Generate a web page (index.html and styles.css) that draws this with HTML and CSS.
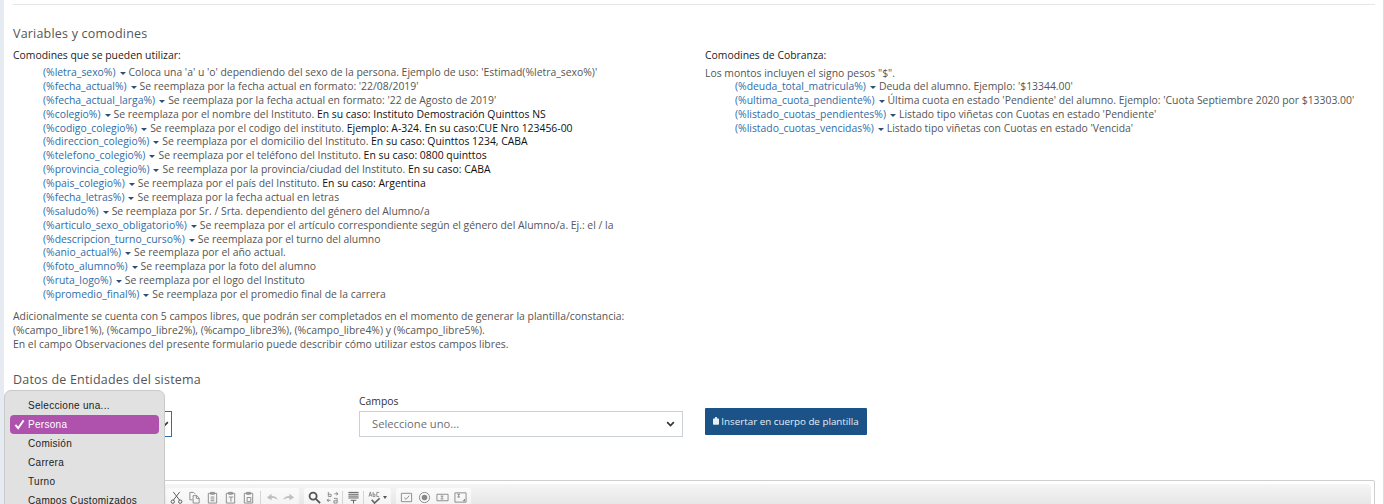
FILE: index.html
```html
<!DOCTYPE html>
<html lang="es">

<head>
    <meta charset="UTF-8">
    <meta name="viewport" content="width=device-width, initial-scale=1.0">
    <title>Plantilla - Variables y comodines</title>
    <link rel="stylesheet" href="styles.css">
</head>

<body>
    <div class="page">
        <hr class="top-line">

        <h2 class="section-title">Variables y comodines</h2>

        <div class="columns">
            <div class="col-left">
                <p class="col-title">Comodines que se pueden utilizar:</p>
                <ul class="vars">
                    <li><a>(%letra_sexo%)</a><i class="caret"></i>Coloca una 'a' u 'o' dependiendo del sexo de la persona. Ejemplo de uso: 'Estimad(%letra_sexo%)'</li>
                    <li><a>(%fecha_actual%)</a><i class="caret"></i>Se reemplaza por la fecha actual en formato: '22/08/2019'</li>
                    <li><a>(%fecha_actual_larga%)</a><i class="caret"></i>Se reemplaza por la fecha actual en formato: '22 de Agosto de 2019'</li>
                    <li><a>(%colegio%)</a><i class="caret"></i>Se reemplaza por el nombre del Instituto. <b>En su caso: Instituto Demostración Quinttos NS</b></li>
                    <li><a>(%codigo_colegio%)</a><i class="caret"></i>Se reemplaza por el codigo del instituto. <b>Ejemplo: A-324. En su caso:CUE Nro 123456-00</b></li>
                    <li><a>(%direccion_colegio%)</a><i class="caret"></i>Se reemplaza por el domicilio del Instituto. <b>En su caso: Quinttos 1234, CABA</b></li>
                    <li><a>(%telefono_colegio%)</a><i class="caret"></i>Se reemplaza por el teléfono del Instituto. <b>En su caso: 0800 quinttos</b></li>
                    <li><a>(%provincia_colegio%)</a><i class="caret"></i>Se reemplaza por la provincia/ciudad del Instituto. <b>En su caso: CABA</b></li>
                    <li><a>(%pais_colegio%)</a><i class="caret"></i>Se reemplaza por el país del Instituto. <b>En su caso: Argentina</b></li>
                    <li><a>(%fecha_letras%)</a><i class="caret"></i>Se reemplaza por la fecha actual en letras</li>
                    <li><a>(%saludo%)</a><i class="caret"></i>Se reemplaza por Sr. / Srta. dependiento del género del Alumno/a</li>
                    <li><a>(%articulo_sexo_obligatorio%)</a><i class="caret"></i>Se reemplaza por el artículo correspondiente según el género del Alumno/a. Ej.: el / la</li>
                    <li><a>(%descripcion_turno_curso%)</a><i class="caret"></i>Se reemplaza por el turno del alumno</li>
                    <li><a>(%anio_actual%)</a><i class="caret"></i>Se reemplaza por el año actual.</li>
                    <li><a>(%foto_alumno%)</a><i class="caret"></i>Se reemplaza por la foto del alumno</li>
                    <li><a>(%ruta_logo%)</a><i class="caret"></i>Se reemplaza por el logo del Instituto</li>
                    <li><a>(%promedio_final%)</a><i class="caret"></i>Se reemplaza por el promedio final de la carrera</li>
                </ul>
            </div>
            <div class="col-right">
                <p class="col-title">Comodines de Cobranza:</p>
                <p class="col-note">Los montos incluyen el signo pesos "$".</p>
                <ul class="vars">
                    <li><a>(%deuda_total_matricula%)</a><i class="caret"></i>Deuda del alumno. Ejemplo: '$13344.00'</li>
                    <li><a>(%ultima_cuota_pendiente%)</a><i class="caret"></i>Última cuota en estado 'Pendiente' del alumno. Ejemplo: 'Cuota Septiembre 2020 por $13303.00'</li>
                    <li><a>(%listado_cuotas_pendientes%)</a><i class="caret"></i>Listado tipo viñetas con Cuotas en estado 'Pendiente'</li>
                    <li><a>(%listado_cuotas_vencidas%)</a><i class="caret"></i>Listado tipo viñetas con Cuotas en estado 'Vencida'</li>
                </ul>
            </div>
        </div>

        <p class="extra">
            Adicionalmente se cuenta con 5 campos libres, que podrán ser completados en el momento de generar la plantilla/constancia:<br>
            (%campo_libre1%), (%campo_libre2%), (%campo_libre3%), (%campo_libre4%) y (%campo_libre5%).<br>
            En el campo Observaciones del presente formulario puede describir cómo utilizar estos campos libres.
        </p>

        <h2 class="section-title entities">Datos de Entidades del sistema</h2>

        <div class="form-row">
            <div class="field field-entity">
                <label>&nbsp;</label>
                <div class="select select-focus"><svg class="chev" viewBox="0 0 12 8"><path d="M1.500 1.500 6 6l4.500-4.500" /></svg></div>
            </div>
            <div class="field field-campos">
                <label>Campos</label>
                <div class="select"><span>Seleccione uno...</span><svg class="chev" viewBox="0 0 12 8"><path d="M1.500 1.500 6 6l4.500-4.500" /></svg></div>
            </div>
            <button class="btn-insert"><svg class="clip" viewBox="0 0 8 10"><path d="M1 1.500h1.500V1a1 1 0 0 1 3 0v.5H7a1 1 0 0 1 1 1V9a1 1 0 0 1-1 1H1a1 1 0 0 1-1-1V2.500a1 1 0 0 1 1-1z" /></svg>Insertar en cuerpo de plantilla</button>
        </div>

        <div class="editor">
            <div class="toolbar">
                <div class="tool-group group-edit">
                    <svg class="ico" viewBox="0 0 14 14"><path class="dark" d="M3.500 1l7 9M10.500 1l-7 9" /><circle class="dark" cx="3" cy="11.500" r="1.800" /><circle class="dark" cx="11" cy="11.500" r="1.800" /></svg>
                    <svg class="ico" viewBox="0 0 14 14"><path d="M5 9.500H2V1.500h4l2 2M5.500 5h4l2.500 2.500v5.500H5.500zM9 5v3h3" /></svg>
                    <svg class="ico" viewBox="0 0 14 14"><path d="M2.500 2.500h9v10.500h-9zM5 1.500h4v2H5zM5 6.500h4M5 8.500h4M5 10.500h4" /></svg>
                    <svg class="ico" viewBox="0 0 14 14"><path d="M2.500 2.500h9v10.500h-9zM5 1.500h4v2H5zM5 6.500h5M7.500 6.500v5" /></svg>
                    <svg class="ico" viewBox="0 0 14 14"><path d="M2.500 2.500h9v10.500h-9zM5 1.500h4v2H5zM5.500 7v4.500h4V7z" /></svg>
                    <i class="tool-sep sep-wide"></i>
                    <svg class="ico faded" viewBox="0 0 14 14"><path class="fill" d="M1 7l5-4v2.500c3 0 5.500 1 7 4-2-1.500-4-2-7-2V10z" /></svg>
                    <svg class="ico faded" viewBox="0 0 14 14"><path class="fill" d="M13 7L8 3v2.500c-3 0-5.500 1-7 4 2-1.500 4-2 7-2V10z" /></svg>
                </div>
                <div class="tool-group group-find">
                    <svg class="ico" viewBox="0 0 14 14"><circle class="heavy" cx="5.500" cy="5.500" r="3.800" /><path class="heavy" d="M8.500 8.500 13 13" /></svg>
                    <svg class="ico" viewBox="0 0 14 14"><path d="M2.500 1v5h3V3.500h-3M9 3h4M11 1.500 13 3l-2 1.500M5 10H1M3 8.500 1 10l2 1.500M8.500 8h3.500v5H8.500V10.500H12" /></svg>
                    <i class="tool-sep"></i>
                    <svg class="ico" viewBox="0 0 14 14"><path class="dark" d="M1.500 1.500h11M1.500 3.500h11M1.500 5.500h11M1.500 7.500h11M4 10h6M7 10v3.500" /></svg>
                    <i class="tool-sep"></i>
                    <svg class="ico" viewBox="0 0 14 14"><path d="M1 6 2.500 1 4 6M1.500 4.500h2M5.500 1v5h2V3.500h-2M12 1.500H9.500V6H12" /><path class="heavy-check" d="M4 9.500l3 3.500 5.500-5" /></svg>
                    <i class="tool-arrow"></i>
                </div>
                <div class="tool-group group-forms">
                    <svg class="ico" viewBox="0 0 14 14"><path d="M1.500 2.500h11v9h-11zM4.500 7l2 2 3.500-4" /></svg>
                    <svg class="ico" viewBox="0 0 14 14"><circle cx="7" cy="7" r="5.500" /><circle class="fill" cx="7" cy="7" r="3" /></svg>
                    <svg class="ico" viewBox="0 0 14 14"><path d="M1 3.500h12v7H1zM5 5.500h3M6.500 5.500v3M5 8.500h3" /></svg>
                    <svg class="ico" viewBox="0 0 14 14"><path d="M1 2h12v10H1zM3.500 3.500h3M5 3.500v3M3.500 6.500h3" /><path class="fill" d="M9 11l3-3v3z" /></svg>
                </div>
            </div>
        </div>
    </div>

    <!-- lista nativa del select abierto -->
    <div class="popup">
        <div class="opt">Seleccione una...</div>
        <div class="opt selected"><svg class="tick" viewBox="0 0 12 12"><path d="M1.500 6.500 4.500 10 10.500 1.500" /></svg>Persona</div>
        <div class="opt">Comisión</div>
        <div class="opt">Carrera</div>
        <div class="opt">Turno</div>
        <div class="opt">Campos Customizados</div>
    </div>
</body>

</html>
```

FILE: styles.css
```css
html,
body {
    margin: 0;
    height: 504px;
    overflow: hidden;
    background: #fff;
}

body {
    font-family: "Open Sans", "Noto Sans", sans-serif;
    font-size: 10.4px;
    color: #555;
    border-left: 4px solid #e6ebf2;
    border-right: 1px solid #dcdcdc;
    box-sizing: border-box;
    position: relative;
}

.page {
    padding: 0 8px 0 9px;
}

.top-line {
    border: 0;
    border-top: 1px solid #e4e6e9;
    margin: 0 0 20px;
    position: relative;
    top: 4px;
}

.section-title {
    font-size: 12.5px;
    font-weight: 400;
    color: #555;
    line-height: 16px;
    margin: 0;
    padding-top: 5px;
    letter-spacing: 0.2px;
}

.columns {
    display: flex;
    margin-top: 6px;
}

.col-left {
    width: 692px;
}

.col-title {
    margin: 0 0 4px;
    line-height: 14px;
    color: #222;
    font-weight: 500;
}

.col-note {
    margin: 0;
    line-height: 14px;
}

.vars {
    list-style: none;
    margin: 0;
    padding: 0 0 0 30px;
}

.vars li {
    line-height: 13.875px;
    white-space: nowrap;
}

.vars a {
    color: #2f6da8;
}

.vars b {
    color: #111;
    font-weight: 500;
}

.caret {
    display: inline-block;
    width: 0;
    height: 0;
    border-left: 3px solid transparent;
    border-right: 3px solid transparent;
    border-top: 3px solid #2c4f78;
    margin: 0 3px 0 4px;
    vertical-align: 1px;
}

.extra {
    margin: 7px 0 0;
    line-height: 14px;
}

.entities {
    margin-top: 16px;
}

.form-row {
    display: flex;
    align-items: flex-end;
    margin-top: 6px;
}

.field label {
    display: block;
    line-height: 14px;
    margin-bottom: 3px;
    color: #333;
}

.field-entity {
    width: 346px;
}

.field-entity .select {
    width: 159px;
    justify-content: flex-end;
    padding-right: 2px;
}

.field-campos {
    width: 346px;
}

.select {
    height: 26px;
    box-sizing: border-box;
    border: 1px solid #ccd0d8;
    width: 324px;
    padding: 0 7px 0 12px;
    display: flex;
    align-items: center;
    justify-content: space-between;
    color: #6c6f75;
    font-size: 11.200px;
}

.select-focus {
    border-color: #2f6da8;
}

.chev {
    width: 9px;
    height: 6px;
    fill: none;
    stroke: #333;
    stroke-width: 2.200;
}

.btn-insert {
    height: 27px;
    width: 162px;
    margin-bottom: 2px;
    background: #1b5287;
    color: #e8eef4;
    border: 0;
    border-radius: 1px;
    font: inherit;
    font-size: 9.800px;
    padding: 0;
    display: flex;
    align-items: center;
    justify-content: center;
}

.clip {
    width: 6px;
    height: 8px;
    fill: #e8eef4;
    margin-right: 2px;
}

.editor {
    margin-top: 43px;
    height: 40px;
    box-sizing: border-box;
    border: 1px solid #cfcfcf;
    border-radius: 2px;
    padding: 3px;
}

.toolbar {
    display: flex;
    gap: 5px;
    height: 40px;
    padding: 4px 0 0 149px;
    box-sizing: border-box;
    border-radius: 4px 4px 0 0;
    background: linear-gradient(#f5f5f5, #d9d9d9);
}

.tool-group {
    display: flex;
    align-items: flex-start;
    gap: 5px;
    height: 28px;
    box-sizing: border-box;
    background: linear-gradient(#fbfbfb, #efefef);
    border-radius: 3px;
    padding: 3px 4px 0;
}

.group-edit {
    width: 133px;
}

.group-find {
    padding-left: 3.500px;
    width: 87px;
}

.group-forms {
    padding-left: 3.500px;
    width: 75px;
}

.ico {
    width: 13px;
    height: 13px;
    fill: none;
    stroke: #888;
    stroke-width: 1;
}

.ico .fill {
    fill: #888;
    stroke: none;
}

.ico .dark,
.ico .heavy {
    stroke: #555;
}

.ico .heavy {
    stroke-width: 2;
}

.ico .heavy-check {
    stroke: #666;
    stroke-width: 1.800;
}

.ico.faded {
    opacity: 0.5;
    margin-right: -2px;
}

.tool-sep {
    width: 1px;
    height: 16px;
    background: #d5d5d5;
    margin: 0 -1.500px;
}

.tool-sep.sep-wide {
    margin: 0;
}

.tool-arrow {
    width: 0;
    height: 0;
    border-left: 2.500px solid transparent;
    border-right: 2.500px solid transparent;
    border-top: 3px solid #555;
    margin: 5px 0 0 -3px;
}

.popup {
    position: absolute;
    left: 0;
    top: 390px;
    width: 161px;
    height: 130px;
    box-sizing: border-box;
    padding: 5px;
    background: #e1e1e1;
    border: 1px solid #c9c9c9;
    border-radius: 7px;
    font-family: "Liberation Sans", sans-serif;
    font-size: 10px;
    color: #222;
    letter-spacing: 0.3px;
}

.opt {
    height: 19px;
    line-height: 19px;
    padding-left: 18px;
    position: relative;
    white-space: nowrap;
}

.opt.selected {
    background: #ae52ae;
    color: #fff;
    border-radius: 4px;
}

.tick {
    position: absolute;
    left: 4px;
    top: 4px;
    width: 11px;
    height: 11px;
    fill: none;
    stroke: #fff;
    stroke-width: 2;
}
```
